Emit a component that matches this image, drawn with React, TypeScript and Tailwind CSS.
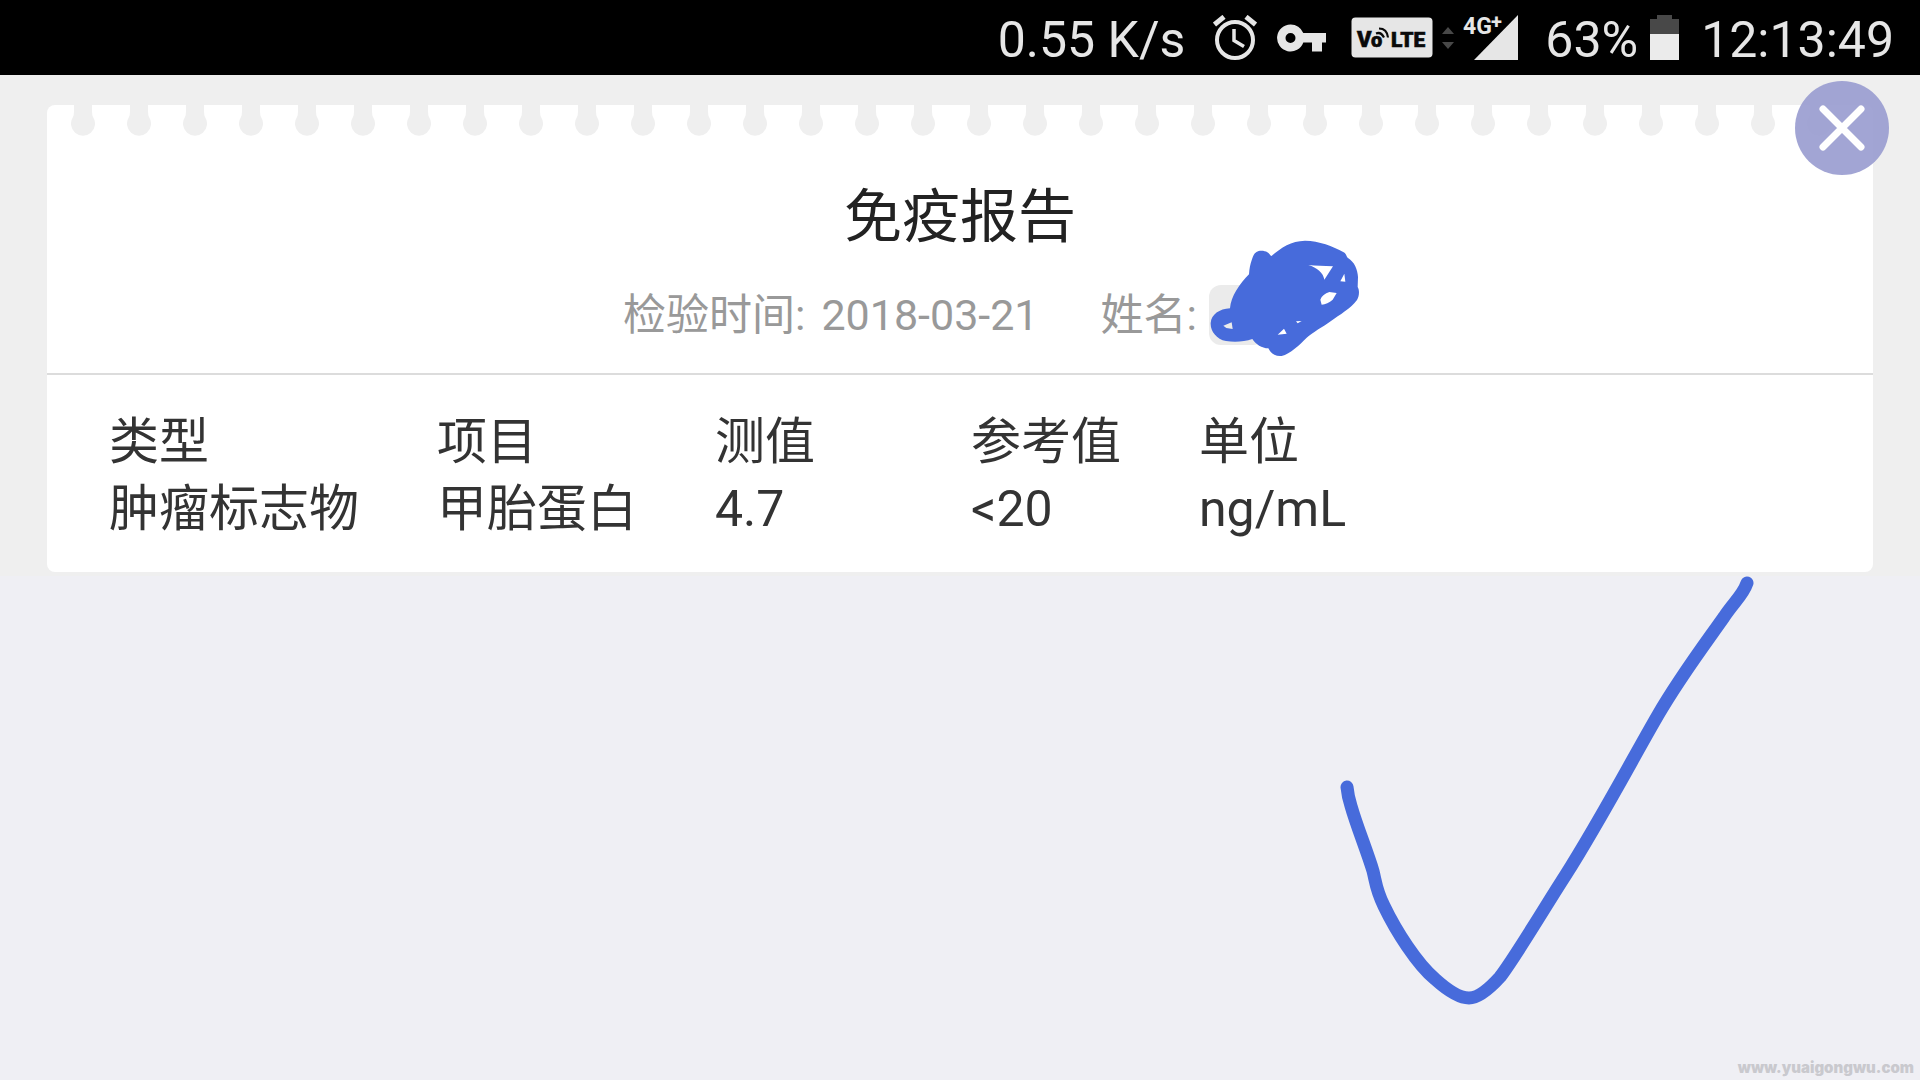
import React from "react";

const NOTCHES = Array.from({ length: 32 }, (_, i) => i);

const COLUMNS = [
  { title: "类型", value: "肿瘤标志物", width: "w-[328px]" },
  { title: "项目", value: "甲胎蛋白", width: "w-[278px]" },
  { title: "测值", value: "4.7", width: "w-[256px]" },
  { title: "参考值", value: "<20", width: "w-[228px]" },
  { title: "单位", value: "ng/mL", width: "" },
];

function AlarmIcon() {
  return (
    <svg className="h-[46px] w-[44px]" viewBox="0 0 44 46" fill="none" stroke="#e6e6e6" aria-label="闹钟">
      <circle cx="22" cy="25" r="18" strokeWidth="4" />
      <path d="M21 14v11.500l10 6" strokeWidth="3.500" />
      <path d="M1.500 9.500L11 1.800M33 1.800l9.500 7.700" strokeWidth="5" />
    </svg>
  );
}

function KeyIcon() {
  return (
    <svg className="h-[28px] w-[50px]" viewBox="0 0 50 28" fill="#e6e6e6" aria-label="VPN">
      <path
        fillRule="evenodd"
        d="M13.500 0.500a13.500 13.500 0 1 0 12.800 18H35v9h10v-9h4V9H26.300A13.500 13.500 0 0 0 13.500 .500zM13.500 9a5 5 0 1 1 0 10 5 5 0 0 1 0-10z"
      />
    </svg>
  );
}

function VolteBadge() {
  return (
    <svg className="h-[41px] w-[82px]" viewBox="0 0 82 41" aria-label="VoLTE">
      <rect x="0.500" y="0.500" width="81" height="40" rx="4" fill="#e6e6e6" />
      <g fill="#0a0a0a" stroke="#0a0a0a" strokeWidth="0.600" fontFamily="Roboto, sans-serif" fontWeight="900" fontSize="22">
        <text x="6" y="30">V</text>
        <text x="20" y="30" fontSize="20">o</text>
        <text x="40" y="30" fontSize="21">LTE</text>
      </g>
      <path d="M25 16.500q5-2 8 4M28 11.500q8 0 9 9" fill="none" stroke="#0a0a0a" strokeWidth="2.200" />
    </svg>
  );
}

function DataArrows() {
  return (
    <svg className="h-[22px] w-[12px]" viewBox="0 0 12 22" fill="#484848" aria-hidden="true">
      <path d="M6 0l6 7H0zM6 22l6-7H0z" />
    </svg>
  );
}

function SignalIcon() {
  return (
    <svg className="h-[66px] w-[56px]" viewBox="0 -10 56 66" aria-label="4G+">
      <path d="M55 0v45H11z" fill="#e6e6e6" />
      <g fill="#e6e6e6" fontFamily="Roboto, sans-serif" fontWeight="700">
        <text x="0" y="19" fontSize="23">
          4G
        </text>
        <text x="28" y="14" fontSize="20">
          +
        </text>
      </g>
    </svg>
  );
}

function BatteryIcon() {
  return (
    <svg className="h-[45px] w-[29px]" viewBox="0 0 29 45" aria-label="电池">
      <path d="M7 0h15v4h7v15H0V4h7z" fill="#484848" />
      <path d="M0 19h29v26H0z" fill="#ebebeb" />
    </svg>
  );
}

function StatusBar() {
  return (
    <header className="flex h-[75px] items-center justify-end bg-black pr-[26px] text-[50px] leading-none text-[#e6e6e6]">
      <span className="pt-1">0.55 K/s</span>
      <span className="ml-7 flex items-center gap-5">
        <AlarmIcon />
        <KeyIcon />
      </span>
      <span className="ml-6 flex items-center gap-[9px]">
        <VolteBadge />
        <DataArrows />
        <SignalIcon />
      </span>
      <span className="ml-[26px] pt-1">63%</span>
      <span className="ml-3">
        <BatteryIcon />
      </span>
      <time className="ml-[22px] pt-1">12:13:49</time>
    </header>
  );
}

function Scribble() {
  return (
    <svg className="absolute -top-[46px] left-0 h-[120px] w-[150px]" viewBox="54 24 450 360" aria-hidden="true">
      <path
        fill="#476bdb"
        fillRule="evenodd"
        d="M182 88C188 66 196 59 211 59C226 59 236 66 240 76C270 50 300 30 342 29C385 30 425 45 458 64C466 68 466 76 470 80C490 92 500 115 501 138L500 168C506 178 505 196 498 207C480 232 445 252 420 270C395 288 365 304 347 320C325 342 298 368 272 375C254 377 240 368 232 352C212 352 195 340 184 324C160 332 132 335 105 330C76 324 58 300 59 276C61 250 85 234 117 232C120 195 145 160 174 130C175 113 178 100 182 88ZM352 102C375 104 398 105 426 106L400 146C397 125 378 110 352 102ZM460 128L463 152L448 151ZM388 206C392 195 402 187 415 183L437 186L425 206C415 215 403 220 392 221ZM97 284L122 274L125 294L106 291ZM260 311L279 293L287 308ZM315 271L332 270L320 277Z"
      />
    </svg>
  );
}

function CheckStroke() {
  return (
    <svg
      className="absolute top-0 right-[160px] h-[440px] w-[420px]"
      viewBox="1340 575 420 440"
      fill="none"
      stroke="#476bdb"
      strokeWidth="13"
      strokeLinecap="round"
      strokeLinejoin="round"
      aria-hidden="true"
    >
      <path d="M1347 786Q1348 796 1351 805C1357 826 1367 850 1373 870C1376 882 1376 889 1384 905C1396 930 1417 963 1435 978Q1456 997 1469 997Q1481 997 1500 976C1516 955 1545 906 1565 875C1600 820 1633 757 1658 714C1680 676 1705 643 1724 616C1734 601 1743 594 1747 582" />
    </svg>
  );
}

export default function App() {
  return (
    <div className="flex min-h-screen flex-col bg-[#efeff4] font-[Roboto,'Noto_Sans_CJK_SC',sans-serif]">
      <StatusBar />
      <main className="relative bg-[#efefef] px-[47px] pt-[30px] pb-1">
        <article className="rounded-lg bg-white pb-[29px]">
          <div className="flex h-8 gap-8 overflow-hidden pl-6" aria-hidden="true">
            {NOTCHES.map((n) => (
              <svg key={n} className="h-8 w-6 shrink-0" viewBox="0 0 24 32" fill="#efefef">
                <path d="M3 0h18v6q0 4 1 6a12 12 0 1 1-20 0q1-2 1-6z" />
              </svg>
            ))}
          </div>
          <div className="flex flex-col items-center border-b-2 border-[#dcdcdc] pt-10 pb-7">
            <h1 className="text-[58px] leading-[80px] text-[#222]">免疫报告</h1>
            <div className="mt-7 flex text-[43px] leading-[60px] text-[#999]">
              <p className="flex gap-4">
                <span>检验时间:</span>
                <time>2018-03-21</time>
              </p>
              <p className="ml-[62px] flex gap-3">
                姓名:
                <span className="relative w-[88px]">
                  <span className="block h-[60px] w-14 rounded-xl bg-[#ebebeb]" />
                  <Scribble />
                </span>
              </p>
            </div>
          </div>
          <table className="mt-[34px] ml-[62px] table-fixed text-left text-[50px] leading-[67px] text-[#333]">
            <thead>
              <tr>
                {COLUMNS.map((c) => (
                  <th key={c.title} scope="col" className={`${c.width} font-normal whitespace-nowrap`}>
                    {c.title}
                  </th>
                ))}
              </tr>
            </thead>
            <tbody>
              <tr>
                {COLUMNS.map((c) => (
                  <td key={c.title} className="whitespace-nowrap">
                    {c.value}
                  </td>
                ))}
              </tr>
            </tbody>
          </table>
        </article>
        <button
          type="button"
          aria-label="关闭"
          className="absolute top-[6px] right-[31px] flex size-[94px] items-center justify-center rounded-full bg-[#989bcf]/90"
        >
          <svg className="size-12" viewBox="0 0 48 48" stroke="#fff" strokeWidth="7" strokeLinecap="round">
            <path d="M5 5l38 38M43 5l-38 38" />
          </svg>
        </button>
      </main>
      <section className="relative flex flex-1 flex-col justify-end">
        <CheckStroke />
        <footer className="pr-[6px] pb-[2px] text-right font-[Inter,sans-serif] text-[15px] leading-5 font-black text-[#c9c9ce]">
          www.yuaigongwu.com
        </footer>
      </section>
    </div>
  );
}
